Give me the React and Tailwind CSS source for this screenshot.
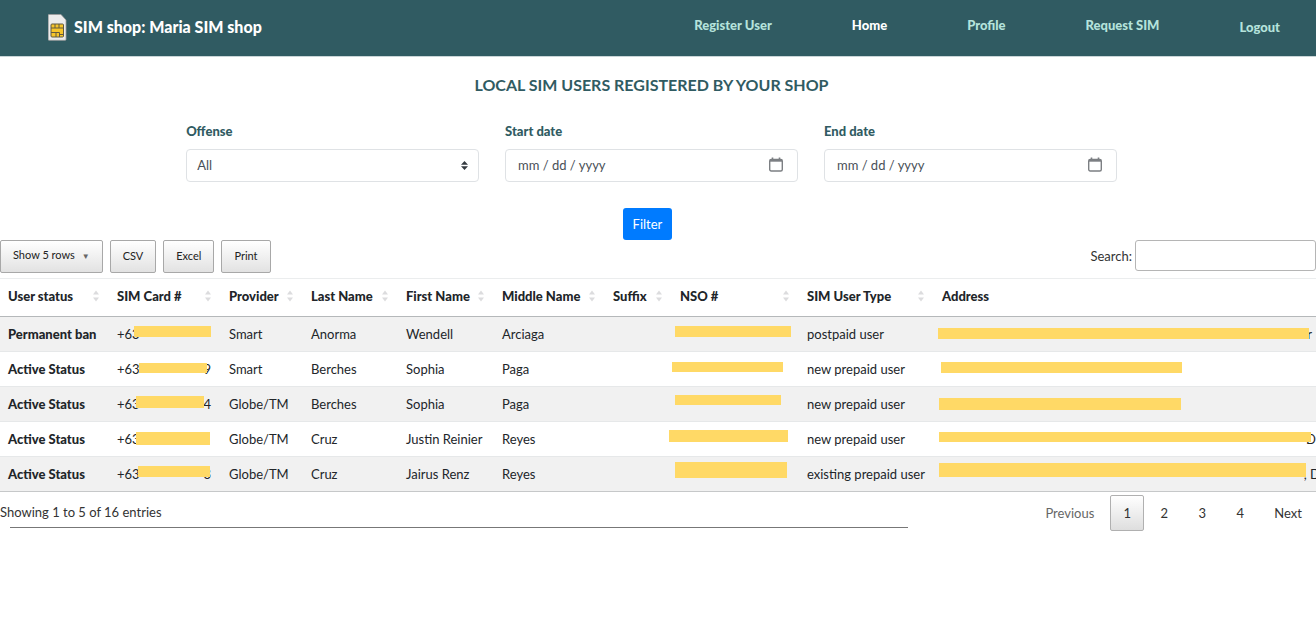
import React from "react";

const rows = [
  {
    status: "Permanent ban", provider: "Smart", last: "Anorma", first: "Wendell", middle: "Arciaga", type: "postpaid user",
    tail: "", end: "r", endClass: "right-1",
    phoneBar: "left-[25px] w-[77px] top-[9px] h-[11px]",
    nsoBar: "left-[3px] w-[116px] top-[9px] h-[11px]",
    addressBar: "left-1 right-[7px] top-[11px] h-[11px]",
  },
  {
    status: "Active Status", provider: "Smart", last: "Berches", first: "Sophia", middle: "Paga", type: "new prepaid user",
    tail: "9", end: "", endClass: "right-0",
    phoneBar: "left-[30px] w-[68px] top-[11px] h-[10px]",
    nsoBar: "left-0 w-[111px] top-[10px] h-[10px]",
    addressBar: "left-[7px] w-[241px] top-[10px] h-[11px]",
  },
  {
    status: "Active Status", provider: "Globe/TM", last: "Berches", first: "Sophia", middle: "Paga", type: "new prepaid user",
    tail: "4", end: "", endClass: "right-0",
    phoneBar: "left-[27px] w-[68px] top-[9px] h-[12px]",
    nsoBar: "left-[3px] w-[106px] top-2 h-[10px]",
    addressBar: "left-[5px] w-[242px] top-[11px] h-[12px]",
  },
  {
    status: "Active Status", provider: "Globe/TM", last: "Cruz", first: "Justin Reinier", middle: "Reyes", type: "new prepaid user",
    tail: "", end: "D", endClass: "right-0",
    phoneBar: "left-[27px] w-[74px] top-[10px] h-[13px]",
    nsoBar: "-left-[3px] w-[119px] top-2 h-[12px]",
    addressBar: "left-[5px] right-[5px] top-[10px] h-[10px]",
  },
  {
    status: "Active Status", provider: "Globe/TM", last: "Cruz", first: "Jairus Renz", middle: "Reyes", type: "existing prepaid user",
    tail: "3", end: ", D", endClass: "-right-1",
    phoneBar: "left-[29px] w-[72px] top-[9px] h-[11px]",
    nsoBar: "left-[3px] w-[112px] top-[5px] h-[16px]",
    addressBar: "left-[5px] right-[10px] top-[6px] h-[14px]",
  },
];

const columns = [
  { name: "User status", width: "w-[109px]" },
  { name: "SIM Card #", width: "w-[112px]" },
  { name: "Provider", width: "w-[82px]" },
  { name: "Last Name", width: "w-[95px]" },
  { name: "First Name", width: "w-[96px]" },
  { name: "Middle Name", width: "w-[111px]" },
  { name: "Suffix", width: "w-[67px]" },
  { name: "NSO #", width: "w-[127px]" },
  { name: "SIM User Type", width: "w-[135px]" },
  { name: "Address", width: "" },
];

const toolButton =
  "h-[33px] rounded-xs border border-[#a8a8a8] bg-linear-to-b from-white to-[#e2e2e2] px-3 pb-[2px] text-[11px] text-[#222]";

function SimIcon() {
  return (
    <svg width="19" height="27" viewBox="0 0 19 27" aria-hidden="true">
      <path d="M1 .5h12l5 5.500v19.500a.8.800 0 0 1-.8.800H1a.8.800 0 0 1-.8-.8V1.300A.8.800 0 0 1 1 .5z" fill="#ececec" stroke="#9c9c9c" strokeWidth=".8" />
      <rect x="3" y="10" width="12.500" height="13" rx="1" fill="#f6c52b" stroke="#615a42" />
      <path d="M3 14h12.500M3 18.500h5v4.500M7 10v4M11 10v4M8 18.500h3.500v4.500M11.500 20.500h4" fill="none" stroke="#615a42" />
    </svg>
  );
}

function CalendarIcon() {
  return (
    <svg width="14" height="15" viewBox="0 0 14 15" fill="none" stroke="#7c7f83" aria-hidden="true">
      <rect x=".7" y="2.500" width="12.600" height="11.500" rx="1.500" strokeWidth="1.400" />
      <path d="M1 3.500h12" strokeWidth="2.400" />
      <path d="M3.500.5v2M10.500.5v2" strokeWidth="1.600" />
    </svg>
  );
}

function SortIcon() {
  return (
    <svg className="shrink-0" width="6" height="12" viewBox="0 0 6 12" fill="#dcdcde" aria-hidden="true">
      <path d="M0 4.500 3 .5l3 4zM0 7.500l3 4 3-4z" />
    </svg>
  );
}

function DateField({ id, label }) {
  return (
    <div className="flex-1">
      <label htmlFor={id} className="block text-[13px] leading-5 font-black text-[#305b62]">{label}</label>
      <div className="mt-2 flex h-[33px] items-center rounded-sm border border-[#dfe2e5] pr-[14px] pb-[2px] pl-3">
        <input id={id} type="text" placeholder="mm / dd / yyyy" className="min-w-0 flex-1 text-[13px] text-[#495057] outline-none placeholder:text-[#495057]" />
        <button type="button" aria-label={"Choose " + label.toLowerCase()}><CalendarIcon /></button>
      </div>
    </div>
  );
}

function Bar({ place }) {
  return <span className={"absolute bg-[#ffd966] " + place} />;
}

export default function App() {
  return (
    <div className="overflow-x-hidden bg-white font-[Lato,sans-serif] text-[13px] leading-5 text-[#333]">
      <header className="flex h-[57px] items-center justify-between border-b border-[#c9d5d7] bg-[#305b62] pr-9 pl-12">
        <div className="flex items-center gap-[7px] pb-[2px] text-base font-black text-white">
          <SimIcon />
          <span>SIM shop: Maria SIM shop</span>
        </div>
        <nav className="flex items-center gap-20 pb-[6px] font-black text-[#b5e3dc]">
          <a href="#register">Register User</a>
          <a href="#home" className="text-white">Home</a>
          <a href="#profile">Profile</a>
          <a href="#request">Request SIM</a>
          <a href="#logout" className="pt-1">Logout</a>
        </nav>
      </header>

      <main>
        <div className="pr-[13px]">
          <h1 className="pt-4 text-center text-base leading-6 font-bold text-[#305b62]">
            LOCAL SIM USERS REGISTERED BY YOUR SHOP
          </h1>
          <form className="mx-auto w-5/7">
            <div className="flex gap-[26px] pt-6">
              <div className="flex-1">
                <label htmlFor="offense" className="block text-[13px] leading-5 font-black text-[#305b62]">Offense</label>
                <div className="relative mt-2">
                  <select id="offense" className="h-[33px] w-full appearance-none rounded-sm border border-[#dfe2e5] bg-white px-[10px] pb-[2px] text-[13px] text-[#495057]">
                    <option>All</option>
                  </select>
                  <svg className="pointer-events-none absolute top-3 right-[11px]" width="7" height="9" viewBox="0 0 7 9" fill="#343a40" aria-hidden="true">
                    <path d="M0 3.700 3.500 0 7 3.700zM0 5.300 3.500 9 7 5.300z" />
                  </svg>
                </div>
              </div>
              <DateField id="start" label="Start date" />
              <DateField id="end" label="End date" />
            </div>
            <div className="flex justify-center pt-[26px] pr-2">
              <button type="button" className="h-8 rounded-[3px] bg-[#007bff] px-[10px] text-[13px] text-white">Filter</button>
            </div>
          </form>
        </div>

        <div className="flex items-start justify-between">
          <div className="flex gap-[7px]">
            <button type="button" className={toolButton}>
              Show 5 rows <span className="ml-1 text-[8px] text-[#666]">▼</span>
            </button>
            <button type="button" className={toolButton}>CSV</button>
            <button type="button" className={toolButton}>Excel</button>
            <button type="button" className={toolButton}>Print</button>
          </div>
          <div className="flex items-center gap-[3px]">
            <label htmlFor="search">Search:</label>
            <input id="search" type="search" className="h-[31px] w-[181px] rounded-[3px] border border-[#b5b5b5] px-1" />
          </div>
        </div>

        <table className="mt-[5px] w-full table-fixed border-collapse border-b border-[#c6c8c9] text-left text-[#212529]">
          <thead>
            <tr className="h-[38px] border-t border-b border-t-[#ebedee] border-b-[#b5b8ba]">
              {columns.map((c) => (
                <th key={c.name} scope="col" className={"pr-[10px] pb-[3px] pl-2 font-black whitespace-nowrap " + c.width}>
                  <span className="flex items-center justify-between">
                    {c.name}
                    {c.name !== "Address" && <SortIcon />}
                  </span>
                </th>
              ))}
            </tr>
          </thead>
          <tbody>
            {rows.map((r, i) => (
              <tr key={i} className="h-[35px] border-t border-[#e6e8e9] whitespace-nowrap odd:bg-[#f1f1f1] first:border-[#b5b8ba]">
                <th scope="row" className="pl-2 font-black">{r.status}</th>
                <td className="relative pl-2">
                  <span className="flex w-[94px] justify-between"><span>+63</span><span>{r.tail}</span></span>
                  <Bar place={r.phoneBar} />
                </td>
                <td className="pl-2">{r.provider}</td>
                <td className="pl-2">{r.last}</td>
                <td className="pl-2">{r.first}</td>
                <td className="pl-2">{r.middle}</td>
                <td />
                <td className="relative"><Bar place={r.nsoBar} /></td>
                <td className="pl-2">{r.type}</td>
                <td className="relative">
                  <span className={"absolute top-[7px] " + r.endClass}>{r.end}</span>
                  <Bar place={r.addressBar} />
                </td>
              </tr>
            ))}
          </tbody>
        </table>

        <div className="flex items-start justify-between">
          <div className="w-[69%] pt-[10px]">
            <p>Showing 1 to 5 of 16 entries</p>
            <hr className="mt-[5px] ml-[10px] border-t border-[#777]" />
          </div>
          <nav aria-label="Pages" className="flex items-center gap-[2px] pt-[3px]">
            <button type="button" className="h-9 px-[14px] text-[#666]">Previous</button>
            <button type="button" className="h-9 w-[34px] rounded-xs border border-[#b0b0b0] bg-linear-to-b from-white to-[#dedede]">1</button>
            <button type="button" className="h-9 w-9">2</button>
            <button type="button" className="h-9 w-9">3</button>
            <button type="button" className="h-9 w-9">4</button>
            <button type="button" className="h-9 px-[14px]">Next</button>
          </nav>
        </div>
      </main>
    </div>
  );
}
